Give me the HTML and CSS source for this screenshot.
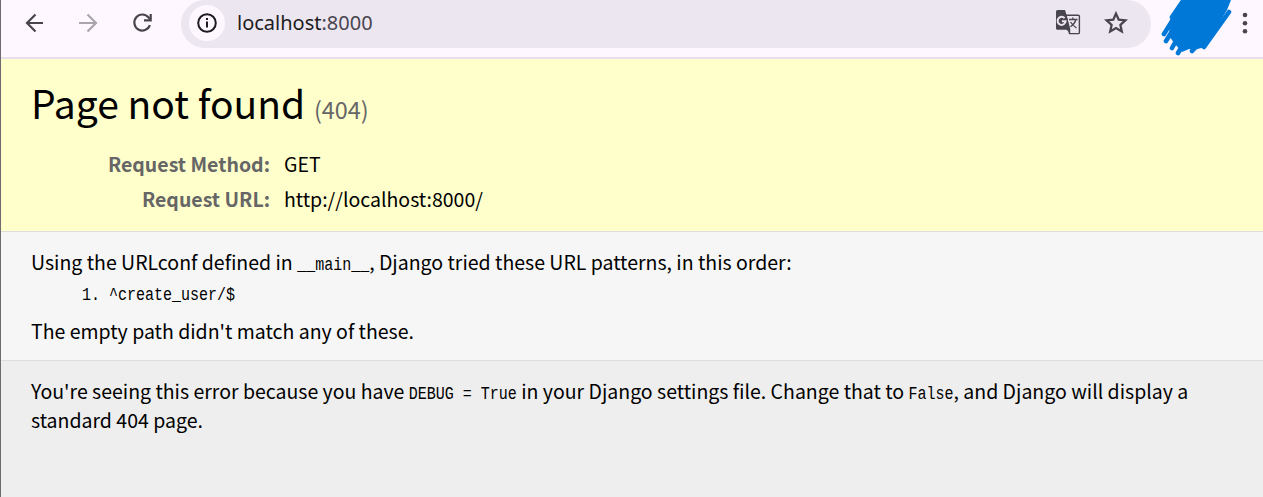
FILE: index.html
```html
<!DOCTYPE html>
<html lang="en">
<head>
<meta charset="utf-8">
<title>Page not found at /</title>
<link rel="stylesheet" href="styles.css">
</head>
<body>
<div class="window">
  <header class="toolbar">
    <svg class="nav back" width="24" height="24" viewBox="0 0 24 24"><path d="M21 12H5M13.500 3.500L5 12l8.500 8.500"/></svg>
    <svg class="nav forward" width="24" height="24" viewBox="0 0 24 24"><path d="M2 12H18M10.500 3.500L19 12l-8.500 8.500"/></svg>
    <svg class="nav reload" width="24" height="24" viewBox="0 0 24 24"><path d="M18.900 14.200A8 8 0 1 1 17.600 6.500L19.500 8.500"/><path d="M19.700 3v6.400h-6.700"/></svg>
    <div class="address">
      <span class="info">
        <svg width="22" height="22" viewBox="0 0 22 22"><circle class="ring" cx="11" cy="11" r="8.800"/><path class="dot" d="M10 6h2v2h-2zM10 9.600h2v6h-2z"/></svg>
      </span>
      <span class="url">localhost<span class="port">:8000</span></span>
      <svg class="translate" width="26" height="26" viewBox="0 0 26 26">
        <path class="sheet" d="M11 6.200h12.200q1.200 0 1.200 1.200v16q0 1.200-1.200 1.200H14.500z"/>
        <path class="fold" d="M2.500 1h7.500l1.300 4 3.900 14.800v4.200l-3.700-3.200h-9q-1.500 0-1.500-1.500V2.500q0-1.500 1.500-1.500z"/>
        <path class="letter" d="M9.600 9.200A4 4 0 1 0 10.600 12.200H6.900"/>
        <path class="stroke" d="M14 10.500h8.500M17.800 8.500v2M21 10.500q-1.300 4.400-5.500 7.200M15.500 13q2.100 3.200 6 6"/>
      </svg>
      <svg class="star" width="24" height="24" viewBox="0 0 24 24"><path d="M12 2.600l2.700 6.100 6.700.7-5 4.500 1.400 6.600-5.800-3.400-5.800 3.400 1.400-6.600-5-4.500 6.700-.7z"/></svg>
    </div>
    <svg class="scribble" width="72" height="57" viewBox="0 0 72 57">
      <path class="ink" d="M22 0H71L67 10L45 47L34 50L29 49L22 52L15 44L9 36L10 20L13 14Z"/>
      <path class="pen" d="M12 17L23 1M4 34L14 18M6 41L16 25M12 48L22 30M18 53L28 36M32 51L46 36M44 47L69 12"/>
    </svg>
    <svg class="menu" width="6" height="24" viewBox="0 0 6 24"><circle cx="3" cy="4" r="2.300"/><circle cx="3" cy="12.200" r="2.300"/><circle cx="3" cy="20.300" r="2.300"/></svg>
  </header>
  <section class="summary">
    <h1>Page not found <span class="status">(404)</span></h1>
    <dl class="meta">
      <dt>Request Method:</dt><dd>GET</dd>
      <dt>Request URL:</dt><dd>http://localhost:8000/</dd>
    </dl>
  </section>
  <section class="info-block">
    <p>Using the URLconf defined in <code>__main__</code>, Django tried these URL patterns, in this order:</p>
    <div class="patterns"><code>1.</code><code>^create_user/$</code></div>
    <p>The empty path didn't match any of these.</p>
  </section>
  <section class="explanation">
    <p>You're seeing this error because you have <code>DEBUG = True</code> in your Django settings file. Change that to <code>False</code>, and Django will display a standard 404 page.</p>
  </section>
</div>
</body>
</html>
```
FILE: styles.css
```css
* { box-sizing: border-box; margin: 0; padding: 0; }
body {
  height: 497px;
  overflow: hidden;
  font: 19.5px/29px "Noto Sans CJK KR", sans-serif;
  color: #000;
}
.window {
  height: 497px;
  display: flex;
  flex-direction: column;
  border-left: 1px solid #6e6a70;
}
.toolbar {
  height: 59px;
  flex: none;
  display: flex;
  align-items: flex-start;
  background: #fef7ff;
  border-bottom: 2px solid #e7e0ec;
}
.nav { margin-top: 11px; fill: none; stroke: #49454f; stroke-width: 2.2; }
.back { margin-left: 21px; }
.forward { margin-left: 31px; stroke: #aaa5ad; }
.reload { margin-left: 30px; }
.address {
  width: 970px;
  height: 48px;
  margin-left: 26px;
  padding-left: 8px;
  display: flex;
  background: #ece6f0;
  border-radius: 24px;
}
.info {
  width: 36px;
  height: 36px;
  margin-top: 5px;
  display: grid;
  place-items: center;
  border-radius: 50%;
  background: #fef7ff;
}
.ring { fill: none; stroke: #1d1b20; stroke-width: 2; }
.dot { fill: #1d1b20; }
.url {
  flex: 1;
  margin-left: 12px;
  font: 20px/46px "Noto Sans", sans-serif;
  color: #1d1b20;
}
.port { color: #49454f; }
.translate { margin: 9px 1px 0 -1px; }
.sheet { fill: none; stroke: #49454f; stroke-width: 1.4; }
.fold { fill: #49454f; }
.letter { fill: none; stroke: #ece6f0; stroke-width: 2; }
.stroke { fill: none; stroke: #49454f; stroke-width: 1.3; }
.star { margin: 11px 23px 0 22px; fill: none; stroke: #49454f; stroke-width: 2.3; }
.scribble { margin-left: 9px; }
.ink { fill: #0078d7; }
.pen { fill: none; stroke: #0078d7; stroke-width: 4.6; stroke-linecap: round; }
.menu { margin: 11px 0 0 10px; fill: #49454f; }
.summary {
  height: 173px;
  flex: none;
  padding: 13px 30px 0;
  background: #ffffcc;
  border-bottom: 1px solid #ddd;
}
h1 { font-size: 39px; line-height: 60px; font-weight: 400; }
.status { font-size: 23.4px; color: #666; }
.meta {
  display: grid;
  grid-template-columns: 239px 1fr;
  column-gap: 14px;
  row-gap: 6px;
  margin-top: 10px;
}
dt { text-align: right; color: #666; font-weight: 700; }
.info-block {
  height: 129px;
  flex: none;
  padding: 16px 30px 0;
  background: #f6f6f6;
  border-bottom: 1px solid #ddd;
}
code {
  display: inline-block;
  font: 15px/16px "Liberation Mono", monospace;
  white-space: pre;
  transform: scaleY(1.25);
  transform-origin: 0 12px;
}
.info-block p, .explanation p { height: 29px; margin-top: -1px; }
.patterns { display: flex; gap: 9px; padding: 13px 0 0 51px; height: 41px; }
.explanation { flex: 1; padding: 16px 30px 0; background: #eee; }
```
